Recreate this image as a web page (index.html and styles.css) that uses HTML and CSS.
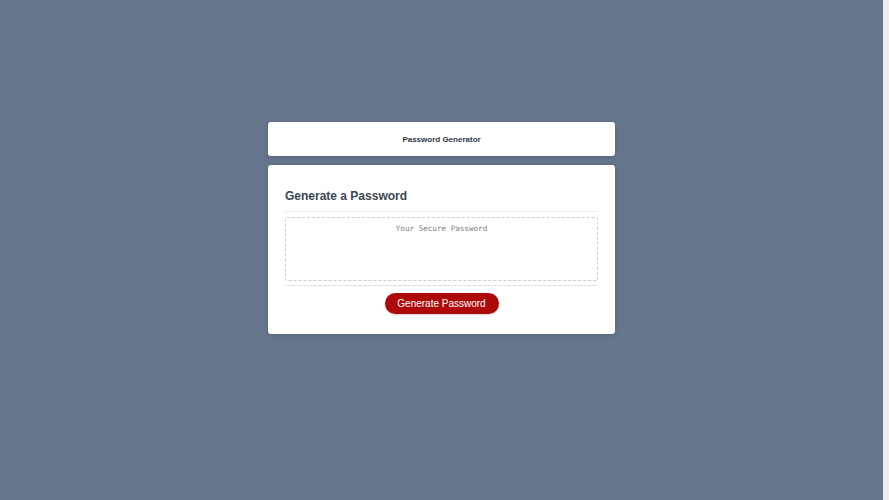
FILE: index.html
```html
<!DOCTYPE html>
<html lang="en">
<head>
<meta charset="UTF-8">
<title>Password Generator</title>
<link rel="stylesheet" href="styles.css">
</head>
<body>
  <div class="wrapper">
    <header class="card title-card">
      <h1 class="title">Password Generator</h1>
    </header>
    <main class="card main-card">
      <div class="card-header">
        <h2 class="heading">Generate a Password</h2>
      </div>
      <div class="card-body">
        <textarea class="password" readonly placeholder="Your Secure Password" aria-label="Generated Password"></textarea>
      </div>
      <div class="card-footer">
        <button class="btn" type="button">Generate Password</button>
      </div>
    </main>
  </div>
</body>
</html>
```

FILE: styles.css
```css
* {
  box-sizing: border-box;
}

html, body {
  margin: 0;
  padding: 0;
}

body {
  background-color: #65758b;
  border-right: 6px solid #eeeeee;
  font-family: "Liberation Sans", Arial, sans-serif;
  color: #3b4754;
}

.wrapper {
  padding: 122px 0 276px;
  display: flex;
  flex-direction: column;
  align-items: center;
  gap: 9px;
}

.card {
  width: 347px;
  background-color: #fff;
  border-radius: 3px;
  box-shadow: rgba(0, 0, 0, 0.15) 0 1px 4px 0;
}

.title-card {
  height: 34px;
  display: flex;
  align-items: center;
  justify-content: center;
}

.title {
  margin: 0;
  font-size: 8px;
  font-weight: bold;
  color: #2f3a45;
}

.main-card {
  padding: 0 17px 20px;
}

.card-header {
  padding-top: 24px;
  padding-bottom: 8px;
  border-bottom: 1px solid #eeeeee;
}

.heading {
  margin: 0;
  font-size: 12px;
  line-height: 14px;
  font-weight: bold;
  color: #3b4754;
}

.card-body {
  padding: 5px 0 4px;
  border-bottom: 1px solid #e4e4e4;
}

.password {
  display: block;
  width: 100%;
  height: 64px;
  resize: none;
  border: 1px dashed #cccccc;
  border-radius: 2px;
  padding: 6px 5px 5px;
  font-family: "DejaVu Sans Mono", monospace;
  font-size: 7.6px;
  text-align: center;
  color: #3b4754;
  background: #fff;
}

.password::placeholder {
  color: #7d7d7d;
}

.card-footer {
  padding-top: 7px;
  display: flex;
  justify-content: center;
}

.btn {
  width: 114px;
  height: 21px;
  border: none;
  border-radius: 11px;
  background-color: #af0808;
  color: #fff;
  font-family: "Liberation Sans", Arial, sans-serif;
  font-size: 10px;
  box-shadow: rgba(0, 0, 0, 0.2) 0 1px 2px 0;
  padding: 0;
}
```
